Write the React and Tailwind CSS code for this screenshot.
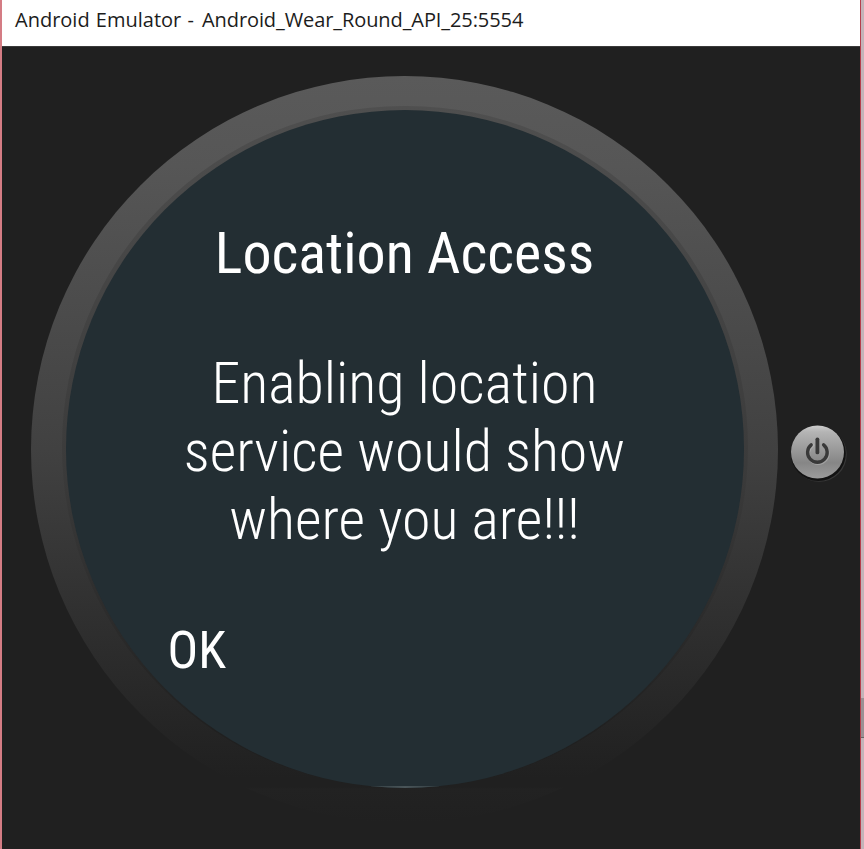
const condensed =
  "font-['Roboto_Condensed','Roboto','Liberation_Sans',sans-serif] [font-stretch:75%] whitespace-nowrap";

function PowerButton() {
  return (
    <svg className="block h-[64px] w-[64px]" viewBox="0 0 64 64">
      <defs>
        <linearGradient id="metal" x1="0" y1="0" x2="0" y2="1">
          <stop offset="0" stopColor="#cccccc" />
          <stop offset="0.12" stopColor="#b4b4b4" />
          <stop offset="0.7" stopColor="#868686" />
          <stop offset="1" stopColor="#9c9c9c" />
        </linearGradient>
      </defs>
      <circle cx="33.3" cy="33.4" r="27.4" fill="#383838" />
      <circle cx="32.3" cy="32.5" r="27.5" fill="#121212" />
      <circle cx="31.5" cy="31.1" r="26.5" fill="url(#metal)" />
      <g fill="none" stroke="#c0c0c0" strokeLinecap="round" opacity="0.45" transform="translate(0.7 1)">
        <path d="M26 23.3a9.8 9.8 0 1 0 10.8 0" strokeWidth="3.5" />
      </g>
      <g fill="none" stroke="#393939" strokeLinecap="round">
        <path d="M25.2 23.9a9.8 9.8 0 1 0 12.4 0" strokeWidth="3.4" />
        <path d="M31.4 18.3V31.4" strokeWidth="3.8" />
      </g>
    </svg>
  );
}

export default function App() {
  return (
    <div className="flex h-[849px] w-[864px] overflow-hidden bg-[#202020]">
      <div className="w-[2px] shrink-0 bg-[#d47c84]" />
      <div className="flex w-[858px] shrink-0 flex-col">
        <header className="flex h-[46px] shrink-0 items-start bg-white pt-[6px] pl-[13px]">
          <div className="flex whitespace-pre font-['Open_Sans','Noto_Sans',sans-serif] text-[20px] leading-[27px] text-[#1c1c1c]">
            <span className="w-[187px] [word-spacing:1px]">Android Emulator - </span>
            <span className="tracking-[-0.09px]">Android_Wear_Round_API_25:5554</span>
          </div>
        </header>
        <main className="flex h-[803px] items-start border-t border-[#3a3a3a] pt-[29px] pl-[29px]">
          <div className="flex h-[747px] w-[747px] shrink-0 justify-center rounded-full bg-[linear-gradient(#5a5a5a_0%,#565656_12%,#414141_50%,#303030_72%,#242424_88%,#202020_94%,#202020_95.2%,#222222_95.4%,#202020_100%)] pt-[30px]">
            <div className="h-[682px] w-[686px] rounded-full bg-[linear-gradient(#4f4f4f,#3a3a3a_55%,#202020_92%,#202020)] px-[4px] pt-[4px]">
              <div className="flex h-[678px] w-[678px] flex-col items-center overflow-hidden rounded-full bg-[#232e33] text-white">
                <h1 className={`${condensed} mt-[109px] h-[68px] text-[58px] leading-[68px] font-normal`}>
                  Location Access
                </h1>
                <p className={`${condensed} mt-[62px] text-center text-[58px] leading-[68px] font-[320]`}>
                  Enabling location
                  <br />
                  service would show
                  <br />
                  where you are!!!
                </p>
                <button className={`${condensed} mt-[68px] ml-[102px] h-[60px] self-start text-[51px] leading-[60px] font-normal`}>
                  OK
                </button>
                <div className="mt-auto h-[2px] w-[68px] bg-[linear-gradient(90deg,#354145,#4a5559,#354145)]" />
              </div>
            </div>
          </div>
          <div className="mt-[345px] ml-[8px] shrink-0">
            <PowerButton />
          </div>
        </main>
      </div>
      <div className="w-[1px] shrink-0 bg-[#b63e4d]" />
      <div className="flex w-[3px] shrink-0 flex-col bg-[#c3b3b8]">
        <div className="mt-[698px] h-[40px] border-b border-[#666] bg-[#9b8f93]" />
      </div>
    </div>
  );
}
